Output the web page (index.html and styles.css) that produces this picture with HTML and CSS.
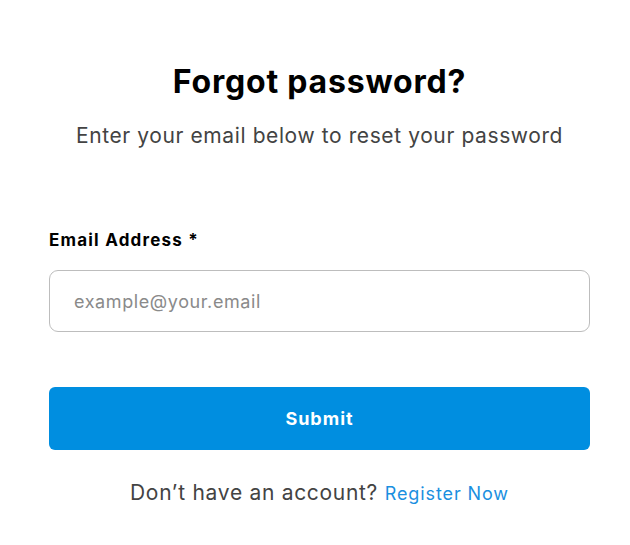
FILE: index.html
```html
<!DOCTYPE html>
<html lang="en">
<head>
<meta charset="utf-8">
<title>Forgot password</title>
<link rel="stylesheet" href="styles.css">
</head>
<body>
<main class="page">
  <header class="intro">
    <h1 class="title">Forgot password?</h1>
    <p class="subtitle">Enter your email below to reset your password</p>
  </header>
  <form class="form">
    <label class="label" for="email">Email Address *</label>
    <input class="input" id="email" type="email" placeholder="example@your.email">
    <button class="submit" type="button">Submit</button>
  </form>
  <p class="footer">Don’t have an account? <a class="link" href="#">Register Now</a></p>
</main>
</body>
</html>
```

FILE: styles.css
```css
* { box-sizing: border-box; }
html, body { margin: 0; padding: 0; background: #fff; }
body { font-family: Inter, Lato, sans-serif; color: #000; }
.page {
  width: 541px;
  margin-left: 49px;
  padding-top: 60px;
  display: flex;
  flex-direction: column;
}
.intro { text-align: center; }
.title {
  margin: 0;
  font-size: 32px;
  font-weight: 700;
  line-height: 44px;
  letter-spacing: 0.8px;
}
.subtitle {
  margin: 18px 0 0;
  font-size: 21px;
  line-height: 28px;
  color: #434343;
  letter-spacing: 0.6px;
}
.form {
  display: flex;
  flex-direction: column;
  margin-top: 79px;
}
.label {
  font-size: 17px;
  font-weight: 700;
  line-height: 22px;
  letter-spacing: 1.2px;
}
.input {
  margin-top: 19px;
  height: 62px;
  border: 1px solid #bdbdbd;
  border-radius: 9px;
  padding: 0 24px;
  font-family: inherit;
  font-size: 18px;
  letter-spacing: 0.6px;
  color: #333;
  outline: none;
}
.input::placeholder { color: #8a8a8a; }
.submit {
  margin-top: 55px;
  height: 63px;
  border: none;
  border-radius: 6px;
  background: #008ee0;
  color: #fff;
  font-family: inherit;
  font-size: 18px;
  font-weight: 700;
  letter-spacing: 1px;
}
.footer {
  margin: 30px 0 0;
  text-align: center;
  font-size: 21px;
  line-height: 26px;
  color: #434343;
  letter-spacing: 0.7px;
}
.link {
  color: #1a8fe0;
  text-decoration: none;
  font-size: 18px;
  letter-spacing: 0.9px;
}
```
